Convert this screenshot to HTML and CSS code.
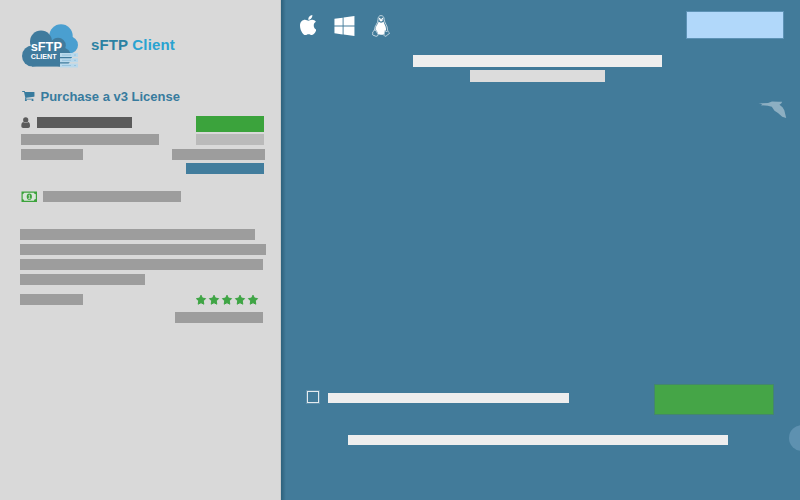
FILE: index.html
```
<!DOCTYPE html>
<html lang="en">
<head>
<meta charset="utf-8">
<title>sFTP Client</title>
<link rel="stylesheet" href="styles.css">
</head>
<body>
<div class="app">
  <aside class="sidebar">
    <header class="brand">
      <svg class="logo" width="58" height="46" viewBox="0 0 58 46">
        <g fill="#4a9fd0"><circle cx="39" cy="13" r="11.700"/><circle cx="47.500" cy="22" r="8.500"/><path d="M28 13h22v22H28z"/></g>
        <g fill="#407b9d"><circle cx="19" cy="18.500" r="11"/><circle cx="10.500" cy="33" r="10.500"/><circle cx="36" cy="22.500" r="7.800"/><circle cx="39.500" cy="34" r="9.800"/><path d="M10 22h30v21.600H10z"/></g>
        <g fill="#b9d9ec"><path d="M38 30h18v4H38zM38 35.300h18v4H38zM38 40.600h18v3.800H38z"/></g>
        <path stroke="#8fbfda" stroke-width=".8" fill="none" d="M40 32h9m3 0h2M40 37.300h9m3 0h2M40 42.500h9m3 0h2"/>
        <text class="logo-name" x="8.700" y="27.500">sFTP</text>
        <text class="logo-sub" x="8.700" y="35.800">CLIENT</text>
      </svg>
      <span class="wordmark"><span class="word-s">sFTP</span> <span class="word-c">Client</span></span>
    </header>

    <h1 class="heading">
      <svg width="12.500" height="10.500" viewBox="0 256 1664 1408"><path fill="currentColor" d="M640 1536q0 52-38 90t-90 38-90-38-38-90 38-90 90-38 90 38 38 90zm896 0q0 52-38 90t-90 38-90-38-38-90 38-90 90-38 90 38 38 90zm128-1088v512q0 24-16.500 42.500t-40.500 21.500l-1044 122q13 60 13 70 0 16-24 64h920q26 0 45 19t19 45-19 45-45 19h-1024q-26 0-45-19t-19-45q0-11 8-31.500t16-36 21.500-40 15.500-29.500l-177-823h-204q-26 0-45-19t-19-45 19-45 45-19h256q16 0 28.500 6.500t19.500 15.500 13 24.500 8 26 5.500 29.500 4.500 26h1201q26 0 45 19t19 45z"/></svg>
      <span class="heading-text">Purchase a v3 License</span>
    </h1>

    <section class="license">
      <div class="license-info">
        <div class="user">
          <svg width="9" height="11" viewBox="0 0 9 11"><g fill="#5b5b5b"><circle cx="4.700" cy="2.900" r="2.600"/><path d="M2.200 5C.8 5.200.3 6.800.3 8.800.3 10.200 1 11 2.200 11h5C8.400 11 9 10.200 9 8.800c0-2-.4-3.600-1.800-3.800-1.300 1.300-3.700 1.300-5 0z"/></g></svg>
          <span class="bar bar-user"></span>
        </div>
        <span class="bar bar-plan"></span>
        <span class="bar bar-short"></span>
      </div>
      <div class="license-side">
        <span class="bar side-green"></span>
        <span class="bar side-light"></span>
        <span class="bar side-wide"></span>
        <span class="bar side-blue"></span>
      </div>
    </section>

    <section class="payment">
      <svg width="16" height="11" viewBox="0 0 16 11"><path fill="#d9e5d9" stroke="#3ca33c" stroke-width="1.200" d="M1.100 1.100h14.300v9.300H1.100z"/><path fill="#3ca33c" d="M1 1h2.200Q3.200 3.200 1 3.200zM15 1h-2.200q0 2.200 2.200 2.200zM1 10.300h2.200Q3.200 8 1 8zM15 10.300h-2.200q0-2.300 2.200-2.300z"/><ellipse cx="8.300" cy="5.700" rx="2.600" ry="3.100" fill="#3ca33c"/><path fill="none" stroke="#d9e5d9" stroke-width=".8" d="M7.500 4.700l.9-.7v3.300M7.200 7.400h2.300"/></svg>
      <span class="bar bar-payment"></span>
    </section>

    <section class="review">
      <span class="bar line-a"></span>
      <span class="bar line-b"></span>
      <span class="bar line-c"></span>
      <span class="bar line-d"></span>
      <div class="rating">
        <span class="bar bar-short"></span>
        <svg width="64" height="12" viewBox="0 0 64 12">
          <defs><path id="star" d="M5 1.200l1.400 2.900 3.200.5-2.300 2.300.5 3.300L5 8.700l-2.800 1.500.5-3.300L.4 4.600l3.200-.5z"/></defs>
          <g fill="#3fa545" stroke="#3fa545" stroke-width="1" stroke-linejoin="round"><use href="#star"/><use href="#star" x="13"/><use href="#star" x="26"/><use href="#star" x="39"/><use href="#star" x="52"/></g>
        </svg>
      </div>
      <span class="bar bar-author"></span>
    </section>
  </aside>

  <main class="main">
    <div class="topbar">
      <div class="platforms">
        <svg width="16" height="20" viewBox="4 32 366 448" preserveAspectRatio="none"><path fill="#fff" d="M318.700 268.700c-.2-36.700 16.400-64.400 50-84.800-18.800-26.900-47.200-41.700-84.700-44.600-35.500-2.800-74.300 20.700-88.500 20.700-15 0-49.400-19.700-76.400-19.700C63.300 141.200 4 184.800 4 273.500q0 39.300 14.400 81.200c12.800 36.700 59 126.700 107.200 125.200 25.200-.6 43-17.900 75.800-17.900 31.800 0 48.300 17.900 76.400 17.900 48.600-.7 90.400-82.500 102.600-119.300-65.200-30.700-61.700-90-61.700-91.900zm-56.600-164.200c27.300-32.400 24.800-61.900 24-72.500-24.100 1.400-52 16.400-67.900 34.900-17.500 19.800-27.800 44.300-25.600 71.900 26.100 2 49.900-11.400 69.500-34.300z"/></svg>
        <svg width="20" height="20" viewBox="-10 32 448 448" overflow="visible"><path fill="#fff" d="M0 93.700l183.600-25.300v177.400H0V93.700zm0 324.600l183.600 25.300V268.400H0v149.900zm203.800 28L448 480V268.400H203.800v177.900zm0-380.600v180.100H448V32L203.800 65.700z"/></svg>
        <svg width="18" height="22" viewBox="0 0 18 22">
          <path fill="none" stroke="#dde8ee" stroke-width=".8" d="M6 4.500C6 2 7 .6 9 .6s3.200 1.500 3.200 4c0 3.200 3.600 6 3.300 10.400M6 4.500c.2 4-3.500 6-3.500 10.500"/>
          <path fill="#fff" d="M6.600 6.600c1.400 1.600 3.400 1.500 4.900-.2.800 3 2.700 4.500 2.500 8.500-1.400.5-1.500 2.400-1.500 4-2 1.200-5 1.200-6.800.1.200-1.800-1-3.300-2.200-4.400.2-3.800 2.500-5.200 3.100-8z"/>
          <path fill="#427b9a" stroke="#e8f0f4" stroke-width=".8" stroke-linejoin="round" d="M2.500 15c1.500.2 2 2 3.200 3.500 1.100 1.500-.2 3.200-2 2.700L.8 20c-.7-.4.200-1.200-.1-2.600-.1-1 1-.7 1.800-2.400zM13 15.300c.5 1.700 2 1.500 2.700.2.100 1.700 2 2 1.700 2.900-.3.700-1.800 1.100-2.700 2.200-1.300 1.300-3 .5-2.600-1.100.3-1.300 0-3.500.9-4.200z"/>
          <path fill="#fff" d="M6.600 4.600L9 4l2.500.7L9 6.800z"/><circle cx="7.700" cy="3.500" r=".8" fill="#fff"/><circle cx="10.400" cy="3.500" r=".8" fill="#fff"/>
        </svg>
      </div>
      <div class="top-button"></div>
    </div>
    <div class="titles">
      <span class="bar title"></span>
      <span class="bar subtitle"></span>
    </div>
    <svg class="bird" width="30" height="19" viewBox="0 0 30 19"><path fill="#8dafc2" d="M1.500 2.900L4 3.300l7-.3 4-1.500 6.500.3 3.700-.1-.8 1.500-1.900 1.500 3 2.500 1.800 3 1.900 7.800-4-1.200-4.200-3.700-3.500-2.300-2.700-4-4-1.100-7-.4 1.500-1z"/></svg>
    <div class="actions">
      <span class="checkbox"></span>
      <span class="bar agree"></span>
      <div class="submit"></div>
    </div>
    <div class="footnote bar"></div>
    <div class="bubble"></div>
  </main>
</div>
</body>
</html>
```

FILE: styles.css
```
* { box-sizing: border-box; }
body { margin: 0; font-family: "Liberation Sans", Arial, sans-serif; }
svg { display: block; flex: none; }
.app { display: flex; width: 800px; height: 500px; overflow: hidden; }
.bar { display: block; flex: none; height: 11px; background: #9d9d9d; }

.sidebar { width: 281px; flex: none; padding: 23px 15px 0 20px; background: #d9d9d9; border-right: 1px solid #c9cccd; }
.brand { display: flex; align-items: flex-start; height: 66px; padding-left: 1.5px; }
.logo-name { font: bold 12.800px "Liberation Sans", Arial, sans-serif; fill: #fff; }
.logo-sub { font: bold 7.200px "Liberation Sans", Arial, sans-serif; fill: #fff; }
.wordmark { margin: 13px 0 0 11.5px; font: bold 15px/17px "Liberation Sans", Arial, sans-serif; letter-spacing: 0.150px; white-space: nowrap; }
.word-s { color: #2c82a3; }
.word-c { color: #2aa3d1; }
.heading { display: flex; align-items: center; gap: 6px; height: 14px; margin: 0; padding-left: 2px; color: #377b9e; font-size: 13px; line-height: 14px; white-space: nowrap; }
.heading-text { padding-top: 1px; }

.license { display: flex; justify-content: space-between; height: 58px; margin: 13px 0 0; padding-left: 1px; }
.license-info { padding-top: 1px; }
.user { display: flex; gap: 7px; margin-bottom: 6px; }
.bar-user { width: 95px; background: #5b5b5b; }
.bar-plan { width: 138px; margin-bottom: 4px; }
.bar-short { width: 62px; }
.license-side { display: flex; flex-direction: column; align-items: flex-end; padding-right: 1px; }
.side-green { width: 68px; height: 16px; background: #3ba33c; }
.side-light { width: 68px; margin-top: 2px; background: #bababa; }
.side-wide { width: 93px; margin: 4px -1px 3px 0; }
.side-blue { width: 78px; background: #427d9d; }
.payment { display: flex; gap: 6px; margin-top: 17px; padding-left: 1px; }
.bar-payment { width: 138px; }

.review { display: flex; flex-direction: column; gap: 4px; margin-top: 27px; }
.line-a { width: 235px; }
.line-b { width: 246px; }
.line-c { width: 243px; }
.line-d { width: 125px; }
.rating { display: flex; justify-content: space-between; height: 11px; margin-top: 5px; padding-right: 5px; }
.rating .bar { width: 63px; }
.bar-author { width: 88px; margin: 3px 2px 0 0; align-self: flex-end; }

.main { position: relative; flex: 1; display: flex; flex-direction: column; background: linear-gradient(90deg, #2d617c, #427b9a 5px); }
.topbar { display: flex; justify-content: space-between; padding: 12px 17px 0 19px; height: 55px; }
.platforms { display: flex; gap: 18px; padding-top: 3px; }
.platforms svg:nth-child(2) { margin-top: 1px; }
.top-button { width: 96px; height: 26px; background: #b1d8fa; outline: 1px solid #5c92b5; }
.titles { display: flex; flex-direction: column; align-items: center; gap: 3px; padding-right: 6px; }
.title { width: 249px; height: 12px; background: #eee; }
.subtitle { width: 135px; height: 12px; background: #dcdcdc; }
.bird { align-self: flex-end; margin: 18px 13px 0 0; }
.actions { display: flex; align-items: flex-start; margin: auto 27px 0 26px; height: 29px; }
.checkbox { width: 12px; height: 12px; margin: 6px 9px 0 0; border: 1.500px solid #e4ebef; outline: 1px solid #5f8faa; }
.agree { width: 241px; height: 10px; margin-top: 8px; background: #eee; }
.submit { width: 118px; height: 29px; margin-left: auto; background: #45a547; outline: 1px solid #43866f; }
.footnote { width: 380px; height: 10px; margin: 21px 0 55px 67px; background: #eee; }
.bubble { position: absolute; right: -15px; top: 425px; width: 26px; height: 26px; border-radius: 50%; background: #5e91b0; }
```
